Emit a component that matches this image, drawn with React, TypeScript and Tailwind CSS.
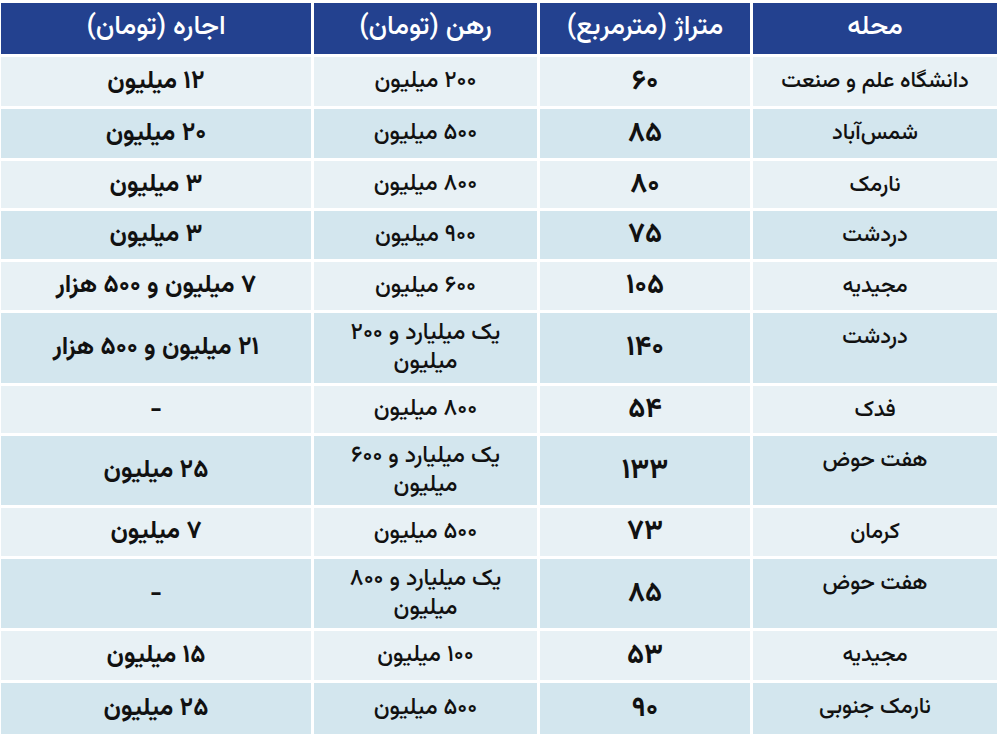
import React from "react";

const rows: { area: string; size: string; deposit: string[]; rent: string }[] = [
  { area: "دانشگاه علم و صنعت", size: "۶۰", deposit: ["۲۰۰ میلیون"], rent: "۱۲ میلیون" },
  { area: "شمس‌آباد", size: "۸۵", deposit: ["۵۰۰ میلیون"], rent: "۲۰ میلیون" },
  { area: "نارمک", size: "۸۰", deposit: ["۸۰۰ میلیون"], rent: "۳ میلیون" },
  { area: "دردشت", size: "۷۵", deposit: ["۹۰۰ میلیون"], rent: "۳ میلیون" },
  { area: "مجیدیه", size: "۱۰۵", deposit: ["۶۰۰ میلیون"], rent: "۷ میلیون و ۵۰۰ هزار" },
  { area: "دردشت", size: "۱۴۰", deposit: ["یک میلیارد و ۲۰۰", "میلیون"], rent: "۲۱ میلیون و ۵۰۰ هزار" },
  { area: "فدک", size: "۵۴", deposit: ["۸۰۰ میلیون"], rent: "-" },
  { area: "هفت حوض", size: "۱۳۳", deposit: ["یک میلیارد و ۶۰۰", "میلیون"], rent: "۲۵ میلیون" },
  { area: "کرمان", size: "۷۳", deposit: ["۵۰۰ میلیون"], rent: "۷ میلیون" },
  { area: "هفت حوض", size: "۸۵", deposit: ["یک میلیارد و ۸۰۰", "میلیون"], rent: "-" },
  { area: "مجیدیه", size: "۵۳", deposit: ["۱۰۰ میلیون"], rent: "۱۵ میلیون" },
  { area: "نارمک جنوبی", size: "۹۰", deposit: ["۵۰۰ میلیون"], rent: "۲۵ میلیون" },
];

const font = {
  fontFamily: '"Vazirmatn", "Noto Sans Arabic", "DejaVu Sans", sans-serif',
};

export default function App() {
  return (
    <div className="w-[1000px] h-[741px] bg-white pt-[3px] px-[3px] overflow-hidden" style={font} dir="rtl">
      <div className="grid grid-cols-[244px_210px_223px_310px] grid-rows-[51px_49px_49px_47px_48px_48px_70px_47px_69px_48px_69px_49px_51px] gap-[3px] text-[#111]">
        {["محله", "متراژ (مترمربع)", "رهن (تومان)", "اجاره (تومان)"].map((h) => (
          <div key={h} className="bg-[#23418f] text-white text-[27px] font-medium flex items-center justify-center">
            {h}
          </div>
        ))}
        {rows.map((r, i) => {
          const bg = i % 2 === 0 ? "bg-[#e8f1f5]" : "bg-[#d3e6ee]";
          return (
            <React.Fragment key={i}>
              <div className={`${bg} flex items-start justify-center`}>
                <div className="h-[48px] flex items-center text-[22px] font-medium">{r.area}</div>
              </div>
              <div className={`${bg} flex items-center justify-center text-[28px] font-bold`}>{r.size}</div>
              <div className={`${bg} flex flex-col items-center justify-center text-[23px] leading-[29px] font-medium`}>
                {r.deposit.map((d, j) => (
                  <div key={j}>{d}</div>
                ))}
              </div>
              <div className={`${bg} flex items-center justify-center text-[25px] font-bold`}>{r.rent}</div>
            </React.Fragment>
          );
        })}
      </div>
    </div>
  );
}
